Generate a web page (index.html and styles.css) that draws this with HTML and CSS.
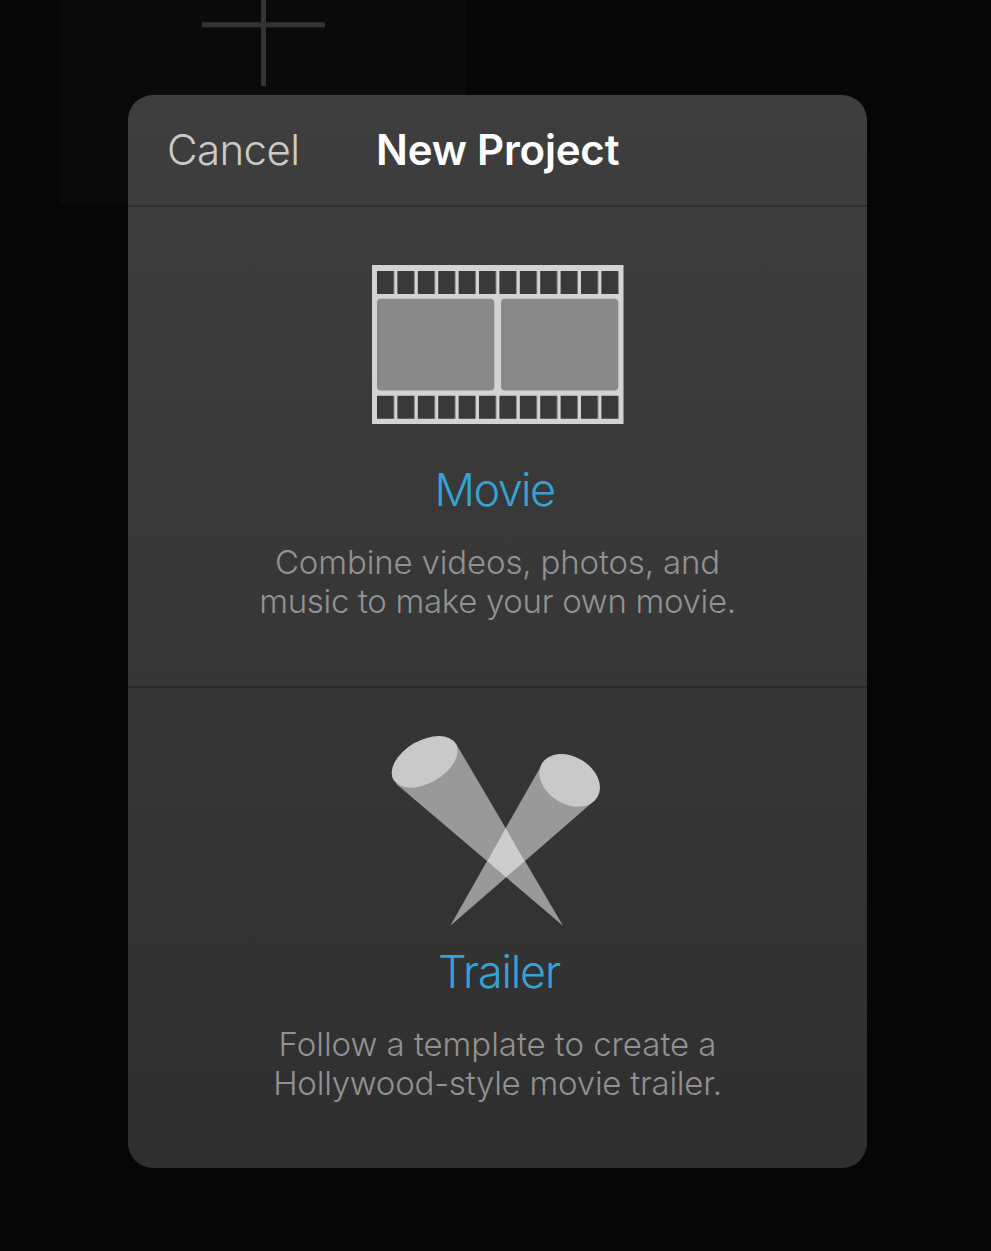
FILE: index.html
```
<!DOCTYPE html>
<html lang="en">
  <head>
    <meta charset="UTF-8" />
    <title>New Project</title>
    <link rel="stylesheet" href="styles.css">
  </head>
  <body>
    <main class="projects">
      <div class="add-tile">
        <svg width="123" height="86" viewBox="0 0 123 86">
          <path d="M0 24.7H123M61.5 0V86" stroke="#343434" stroke-width="5" />
        </svg>
      </div>
    </main>

    <div class="overlay">
      <div class="dialog">
        <header class="dialog-header">
          <span class="cancel">Cancel</span>
          <h1>New Project</h1>
        </header>

        <section class="option movie">
          <svg class="film" width="252" height="159" viewBox="0 0 252 159">
            <defs>
              <pattern id="holes" x="5" y="0" width="20.4" height="159" patternUnits="userSpaceOnUse">
                <path fill="#393939" d="M0 6H17V29H0zM0 130.7H17V153.7H0z" />
              </pattern>
            </defs>
            <rect width="251.5" height="159" fill="#d3d3d3" />
            <rect x="5" width="242" height="159" fill="url(#holes)" />
            <rect x="5" y="33.7" width="117.3" height="91.7" rx="4" fill="#898989" />
            <rect x="129" y="33.7" width="117.3" height="91.7" rx="4" fill="#898989" />
          </svg>
          <h2>Movie</h2>
          <p><span class="line-a">Combine videos, photos, and</span><br /><span class="line-b">music to make your own movie.</span></p>
        </section>

        <section class="option trailer">
          <svg class="lights" width="230" height="210" viewBox="0 0 690 630">
            <path fill="#999" d="M228 56L549 602L49 177L134 110z" />
            <path fill="#999" d="M487 116L211 602L641 229L569 166z" />
            <path fill="#cdcdcd" d="M377 310L434 409L378 457L322 409z" />
            <ellipse cx="134" cy="110.5" rx="108" ry="64" transform="rotate(-30 134 110.5)" fill="#c9c9c9" />
            <ellipse cx="569" cy="166" rx="97.5" ry="70.8" transform="rotate(31.5 569 166)" fill="#c9c9c9" />
          </svg>
          <h2>Trailer</h2>
          <p><span class="line-c">Follow a template to create a</span><br /><span class="line-d">Hollywood-style movie trailer.</span></p>
        </section>
      </div>
    </div>
  </body>
</html>
```

FILE: styles.css
```
* {
  box-sizing: border-box;
}
body {
  margin: 0;
  height: 1251px;
  overflow: hidden;
  background-color: #060606;
  font-family: Inter, "Liberation Sans", sans-serif;
}
h1,
h2,
p {
  margin: 0;
}
svg {
  display: block;
}
.projects {
  padding-left: 60px;
}
.add-tile {
  display: flex;
  justify-content: center;
  width: 407px;
  height: 204px;
  background-color: #0a0a0a;
}
.overlay {
  position: absolute;
  inset: 0;
  padding: 95px 0 0 128px;
}
.dialog {
  width: 739px;
  height: 1073px;
  border-radius: 25px;
  background: linear-gradient(#3e3e3e, #2f2f2f);
}
.dialog-header {
  display: grid;
  grid-template-columns: 209px 1fr;
  align-items: center;
  height: 112px;
  padding-left: 39px;
  border-bottom: 2px solid #303030;
  font-size: 42px;
  line-height: 110px;
}
.cancel {
  color: #cacaca;
  font-weight: 350;
  letter-spacing: -0.6px;
}
h1 {
  color: #fff;
  font-size: 42px;
  font-weight: 600;
  letter-spacing: -0.2px;
}
.option {
  display: flex;
  flex-direction: column;
  align-items: center;
  height: 481px;
  text-align: center;
}
.movie {
  padding-top: 58px;
  border-bottom: 2px solid #2b2b2b;
}
.trailer {
  padding-top: 37px;
}
.lights {
  margin-right: 5px;
}
h2 {
  color: #35a4d4;
  font-size: 45px;
  font-weight: 300;
  line-height: 54px;
}
.movie h2 {
  margin-top: 39px;
  margin-right: 6px;
  letter-spacing: -1.6px;
}
.trailer h2 {
  margin-top: 10px;
  margin-left: 3px;
  letter-spacing: -1.2px;
}
p {
  margin-top: 26px;
  color: #929292;
  font-size: 33px;
  font-weight: 300;
  line-height: 39px;
  white-space: nowrap;
}
.line-a {
  letter-spacing: -0.15px;
}
.line-b {
  letter-spacing: -0.32px;
}
.line-c {
  letter-spacing: -0.03px;
}
.line-d {
  letter-spacing: -0.24px;
}
```
